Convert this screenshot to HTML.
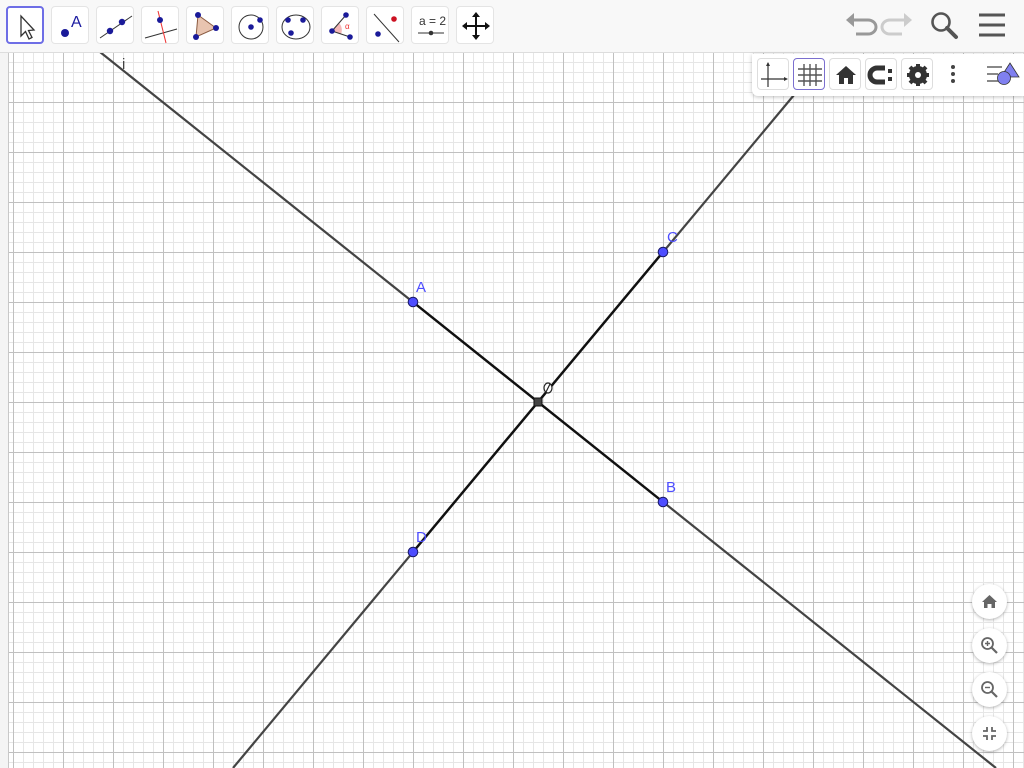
<!DOCTYPE html>
<html><head><meta charset="utf-8"><style>
body{margin:0;width:1024px;height:768px;overflow:hidden;font-family:"Liberation Sans",sans-serif;background:#fff;position:relative}
#tb{position:absolute;left:0;top:0;width:1024px;height:52px;background:#f8f8f8;border-bottom:1px solid #ddd}
.tool{position:absolute;top:6px;width:38px;height:38px;border-radius:4px;background:#fff;border:1px solid #e4e4e4;box-sizing:border-box}
.tool.sel{border:2px solid #6e6ee6}
.tool svg{position:absolute;left:0;top:0}
#panel{position:absolute;left:752px;top:54px;width:272px;height:42px;background:#fff;border-radius:0 0 0 6px;box-shadow:0 1px 4px rgba(0,0,0,.25)}
.pb{position:absolute;top:4px;width:32px;height:32px;border:1px solid #ddd;border-radius:4px;box-sizing:border-box;background:#fff}
.zb{position:absolute;left:972px;width:35px;height:35px;border-radius:50%;background:#fff;box-shadow:0 1px 3px rgba(0,0,0,.3)}
.zb svg{position:absolute;left:0;top:0}
</style></head><body>
<svg width="1024" height="768" style="position:absolute;left:0;top:0">
<defs>
<pattern id="mn" x="3" y="2" width="10" height="10" patternUnits="userSpaceOnUse"><path d="M0 .5H10M.5 0V10" stroke="#e6e6e6" stroke-width="1" fill="none"/></pattern>
<pattern id="mj" x="13" y="2" width="50" height="50" patternUnits="userSpaceOnUse"><path d="M0 .5H50M.5 0V50" stroke="#c0c0c0" stroke-width="1" fill="none"/></pattern>
</defs>
<rect x="0" y="52" width="1024" height="716" fill="url(#mn)"/>
<rect x="0" y="52" width="1024" height="716" fill="url(#mj)"/>
<rect x="0" y="52" width="8" height="716" fill="#f4f4f4"/>
<line x1="8.5" y1="52" x2="8.5" y2="768" stroke="#c8c8c8"/>
<line x1="100" y1="52" x2="996" y2="768" stroke="#444" stroke-width="2.2"/>
<line x1="233" y1="768" x2="794" y2="95" stroke="#444" stroke-width="2.2"/>
<line x1="413" y1="302" x2="663" y2="502" stroke="#111" stroke-width="2.4"/>
<line x1="663" y1="252" x2="413" y2="552" stroke="#111" stroke-width="2.4"/>
<rect x="534" y="398" width="8" height="8" fill="#444" stroke="#111"/>
<ellipse cx="548" cy="388" rx="4" ry="5" fill="#fff" stroke="#222" stroke-width="1.2"/>
<line x1="546" y1="392" x2="550" y2="384" stroke="#222" stroke-width="1.2"/>
<g fill="#4d4dff" stroke="#1a1a66" stroke-width="1">
<circle cx="413" cy="302" r="4.8"/><circle cx="663" cy="502" r="4.8"/><circle cx="663" cy="252" r="4.8"/><circle cx="413" cy="552" r="4.8"/></g>
<g fill="#4d4dff" font-size="15" font-family="Liberation Sans,sans-serif">
<text x="416" y="292">A</text><text x="666" y="492">B</text><text x="667" y="242">C</text><text x="416" y="542">D</text></g>
<text x="122" y="69" font-size="15" fill="#444">i</text>
</svg>
<div id="tb">
<div class="tool sel" style="left:6px"><svg width="38" height="38"><path d="M13 8L13 28 17.5 23.5 21 31 24 29.5 20.5 22.5 26 22Z" fill="#fff" stroke="#333" stroke-width="1.3"/></svg></div>
<div class="tool" style="left:51px"><svg width="38" height="38"><circle cx="13" cy="26" r="4" fill="#1a1a99"/><text x="19" y="20" font-size="16" fill="#1a1aa0" font-family="Liberation Sans">A</text></svg></div>
<div class="tool" style="left:96px"><svg width="38" height="38"><line x1="3" y1="31" x2="35" y2="9" stroke="#333"/><circle cx="13" cy="24" r="3.2" fill="#1a1a99"/><circle cx="25" cy="15" r="3.2" fill="#1a1a99"/></svg></div>
<div class="tool" style="left:141px"><svg width="38" height="38"><line x1="3" y1="31" x2="35" y2="22" stroke="#333"/><line x1="16" y1="4" x2="24" y2="36" stroke="#e33"/><circle cx="18" cy="13" r="3" fill="#1a1a99"/></svg></div>
<div class="tool" style="left:186px"><svg width="38" height="38"><path d="M11 8L29 21 9 30Z" fill="#e8c4b0" stroke="#8a5a40"/><circle cx="11" cy="8" r="3" fill="#1a1a99"/><circle cx="29" cy="21" r="3" fill="#1a1a99"/><circle cx="9" cy="30" r="3" fill="#1a1a99"/></svg></div>
<div class="tool" style="left:231px"><svg width="38" height="38"><circle cx="19" cy="20" r="12" fill="none" stroke="#333"/><circle cx="19" cy="20" r="2.8" fill="#1a1a99"/><circle cx="28" cy="13" r="2.8" fill="#1a1a99"/></svg></div>
<div class="tool" style="left:276px"><svg width="38" height="38"><ellipse cx="19" cy="20" rx="14" ry="12" fill="none" stroke="#333"/><circle cx="11" cy="13" r="2.8" fill="#1a1a99"/><circle cx="26" cy="13" r="2.8" fill="#1a1a99"/><circle cx="14" cy="26" r="2.8" fill="#1a1a99"/></svg></div>
<div class="tool" style="left:321px"><svg width="38" height="38"><path d="M10 24L24 8 A20 20 0 0 1 28 30Z" fill="none"/><path d="M10 24L17 16 A10 10 0 0 1 19 27Z" fill="#f5b8b8"/><line x1="10" y1="24" x2="24" y2="8" stroke="#333"/><line x1="10" y1="24" x2="28" y2="30" stroke="#333"/><circle cx="10" cy="24" r="2.8" fill="#1a1a99"/><circle cx="24" cy="8" r="2.8" fill="#1a1a99"/><circle cx="28" cy="30" r="2.8" fill="#1a1a99"/><text x="23" y="22" font-size="8" fill="#e33">α</text></svg></div>
<div class="tool" style="left:366px"><svg width="38" height="38"><line x1="7" y1="7" x2="32" y2="35" stroke="#333"/><circle cx="27" cy="12" r="2.8" fill="#cc1122"/><circle cx="11" cy="27" r="2.8" fill="#1a1a99"/></svg></div>
<div class="tool" style="left:411px"><svg width="38" height="38"><text x="7" y="18" font-size="12" fill="#333" font-family="Liberation Sans">a = 2</text><line x1="6" y1="26" x2="32" y2="26" stroke="#333"/><circle cx="19" cy="26" r="2.3" fill="#333"/></svg></div>
<div class="tool" style="left:456px"><svg width="38" height="38"><path d="M19 7V31M7 19H31" stroke="#111" stroke-width="2"/><path d="M19 5L15 10H23ZM19 33L15 28H23ZM5 19L10 15V23ZM33 19L28 15V23Z" fill="#111"/></svg></div>
<svg width="180" height="52" style="position:absolute;left:840px;top:0">
<path d="M12 20H28A8 7 0 0 1 28 34H16" fill="none" stroke="#999" stroke-width="3"/><path d="M6 20L14 13V27Z" fill="#999"/>
<path d="M66 20H50A8 7 0 0 0 50 34H62" fill="none" stroke="#ccc" stroke-width="3"/><path d="M72 20L64 13V27Z" fill="#ccc"/>
<circle cx="101" cy="22" r="8.5" fill="none" stroke="#555" stroke-width="2.6"/><line x1="107" y1="28" x2="116" y2="37" stroke="#555" stroke-width="4" stroke-linecap="round"/>
<path d="M139 15H165M139 25H165M139 35H165" stroke="#555" stroke-width="3"/>
</svg>
</div>
<div id="panel">
<div class="pb" style="left:5px"><svg width="32" height="32"><path d="M3 20H28M10 4V28" stroke="#333" stroke-width="1.2"/><path d="M10 3L8 7H12ZM30 20L26 18V22Z" fill="#333"/></svg></div>
<div class="pb" style="left:41px;border-color:#7b6fcf"><svg width="32" height="32"><path d="M10 5V27M16 5V27M22 5V27M4 10H28M4 16H28M4 22H28" stroke="#555" stroke-width="1.4"/></svg></div>
<div class="pb" style="left:77px"><svg width="32" height="32"><path d="M6 16L16 7 26 16H23V25H18V19H14V25H9V16Z" fill="#333"/></svg></div>
<div class="pb" style="left:113px"><svg width="32" height="32"><path d="M19 9H11A7 7 0 0 0 11 23H19" fill="none" stroke="#333" stroke-width="5"/><rect x="22" y="10" width="4" height="4" fill="#333"/><rect x="22" y="18" width="4" height="4" fill="#333"/></svg></div>
<div class="pb" style="left:149px"><svg width="32" height="32"><circle cx="16" cy="16" r="7" fill="none" stroke="#333" stroke-width="4"/><path d="M16 5V27M5 16H27M8 8L24 24M24 8L8 24" stroke="#333" stroke-width="4"/><circle cx="16" cy="16" r="3" fill="#fff"/></svg></div>
<svg width="10" height="32" style="position:absolute;left:196px;top:4px"><circle cx="5" cy="9" r="2" fill="#444"/><circle cx="5" cy="16" r="2" fill="#444"/><circle cx="5" cy="23" r="2" fill="#444"/></svg>
<svg width="40" height="32" style="position:absolute;left:232px;top:4px"><path d="M3 9H18M3 16H14M3 23H14" stroke="#888" stroke-width="2"/><path d="M26 5L35 19H17Z" fill="#8080f0" stroke="#333" stroke-width=".8"/><circle cx="20" cy="20" r="6.5" fill="#8080f0" stroke="#333" stroke-width=".8"/></svg>
</div>
<div class="zb" style="top:584px"><svg width="35" height="35"><path d="M10 18L17.5 11 25 18H23V24H19.5V20H15.5V24H12V18Z" fill="#666"/></svg></div>
<div class="zb" style="top:628px"><svg width="35" height="35"><circle cx="15.5" cy="15.5" r="5.5" fill="none" stroke="#666" stroke-width="1.8"/><path d="M13 15.5H18M15.5 13V18" stroke="#666" stroke-width="1.4"/><line x1="19.5" y1="19.5" x2="25" y2="25" stroke="#666" stroke-width="2.2"/></svg></div>
<div class="zb" style="top:672px"><svg width="35" height="35"><circle cx="15.5" cy="15.5" r="5.5" fill="none" stroke="#666" stroke-width="1.8"/><path d="M13 15.5H18" stroke="#666" stroke-width="1.4"/><line x1="19.5" y1="19.5" x2="25" y2="25" stroke="#666" stroke-width="2.2"/></svg></div>
<div class="zb" style="top:716px"><svg width="35" height="35"><path d="M11 15H15V11M20 11V15H24M11 20H15V24M20 24V20H24" fill="none" stroke="#666" stroke-width="1.8"/></svg></div>
</body></html>
